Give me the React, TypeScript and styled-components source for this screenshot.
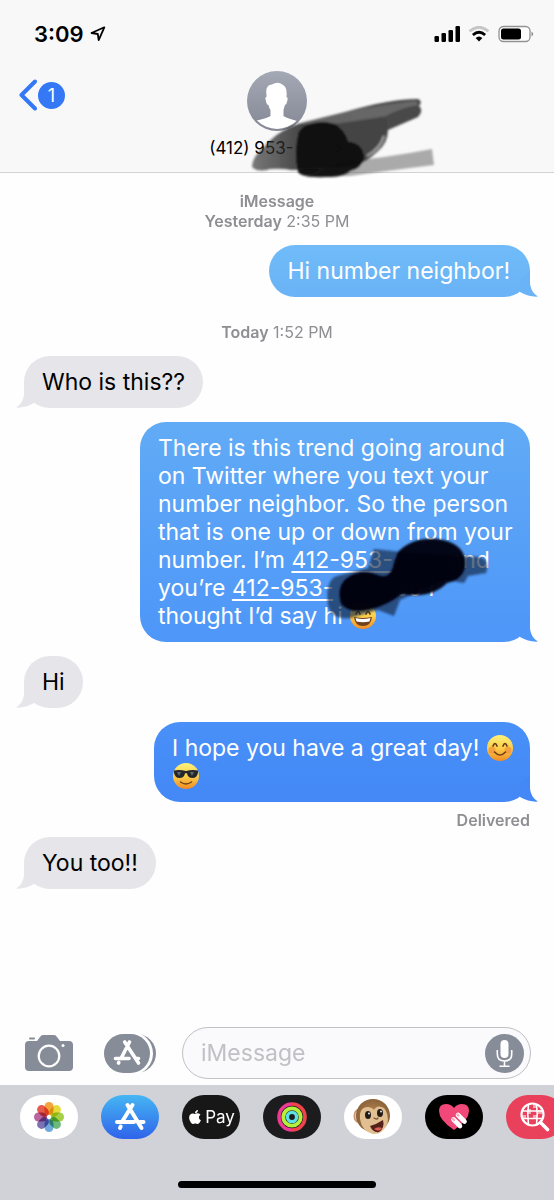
import React from "react";
import styled, { createGlobalStyle } from "styled-components";
import { FaApple } from "react-icons/fa";

const GlobalStyle = createGlobalStyle`
  *, *::before, *::after { box-sizing: border-box; }
  body { margin: 0; background: #fff; }
  button, input { font: inherit; color: inherit; }
`;

const Screen = styled.div`
  display: flex;
  flex-direction: column;
  min-height: 100vh;
  overflow: hidden;
  background: #fefefe;
  color: #000;
  font-family: Inter, "Liberation Sans", sans-serif;
`;

const Header = styled.header`
  position: relative;
  padding: 24px 18px 14px;
  background: #f8f8f8;
  border-bottom: 1px solid #d3d3d5;
`;

const StatusBar = styled.div`
  display: flex;
  align-items: center;
  justify-content: space-between;
  height: 20px;
  padding: 0 2px 0 16px;
`;

const Clock = styled.div`
  display: flex;
  align-items: center;
  gap: 6px;
  font-size: 22px;
  font-weight: 600;
  line-height: 20px;
`;

const StatusIcons = styled.div`
  display: flex;
  align-items: center;
  gap: 8px;
`;

const NavBar = styled.div`
  display: grid;
  grid-template-columns: 1fr auto 1fr;
  align-items: start;
  margin-top: 27px;
`;

const PlainButton = styled.button`
  display: flex;
  align-items: center;
  padding: 0;
  border: 0;
  background: none;
  cursor: pointer;
`;

const BackButton = styled(PlainButton)`
  gap: 1px;
  margin-top: 8px;
  justify-self: start;
`;

const UnreadBadge = styled.span`
  width: 27px;
  height: 27px;
  border-radius: 50%;
  background: #3478f6;
  color: #fff;
  font-size: 18px;
  line-height: 27px;
  text-align: center;
`;

const ContactButton = styled(PlainButton)`
  flex-direction: column;
  gap: 7px;
  font-size: 17px;
  line-height: 20px;
`;

const ContactName = styled.span`
  display: flex;
  align-items: center;
  white-space: nowrap;
`;

const Hidden = styled.span<{ $width: number }>`
  display: inline-block;
  width: ${(p) => p.$width}px;
`;

const HeaderScribble = styled.svg`
  position: absolute;
  top: 90px;
  left: calc(50% - 37px);
  pointer-events: none;
`;

const Thread = styled.main`
  flex: 1;
  display: flex;
  flex-direction: column;
  gap: 14px;
  padding: 18px 24px 24px;
`;

const Stamp = styled.div`
  color: #8e8e93;
  font-size: 16px;
  line-height: 20px;
  text-align: center;
`;

const DayStamp = styled(Stamp)`
  padding-top: 11px;
`;

const Strong = styled.span`
  font-weight: 600;
`;

const Bubble = styled.div`
  position: relative;
  width: fit-content;
  max-width: 390px;
  padding: 12px 18px;
  border-radius: 26px;
  font-size: 23px;
  line-height: 28px;
`;

const Received = styled(Bubble)`
  background: #e5e5ea;
  color: #000;
`;

const Sent = styled(Bubble)<{ $from: string; $to: string; $max?: number; $tight?: boolean }>`
  align-self: flex-end;
  max-width: ${(p) => p.$max ?? 390}px;
  padding-right: ${(p) => (p.$tight ? 12 : 20)}px;
  background: linear-gradient(${(p) => p.$from}, ${(p) => p.$to});
  color: #fff;
`;

const TailSvg = styled.svg<{ $side: "left" | "right" }>`
  position: absolute;
  bottom: 0;
  ${(p) => p.$side}: -8px;
  transform: ${(p) => (p.$side === "left" ? "scaleX(-1)" : "none")};
`;

const SentGroup = styled.div`
  display: flex;
  flex-direction: column;
  gap: 8px;
  margin-bottom: -7px;
`;

const Delivered = styled(Stamp)`
  font-weight: 600;
  text-align: right;
`;

const PhoneLink = styled.a`
  color: inherit;
  text-decoration: underline;
  text-decoration-thickness: 2px;
  text-underline-offset: 3px;
`;

const Emoji = styled.svg`
  display: inline-block;
  margin: -4px 0;
  vertical-align: -2px;
`;

const BubbleScribble = styled.svg`
  position: absolute;
  right: 26px;
  top: 110px;
  pointer-events: none;
`;

const Composer = styled.form`
  display: flex;
  align-items: center;
  padding: 0 23px 6px 25px;
`;

const AppsButton = styled(PlainButton)`
  margin: 0 26px 0 31px;
`;

const Field = styled.div`
  display: flex;
  flex: 1;
  align-items: center;
  min-width: 0;
  height: 52px;
  padding: 0 6px 0 18px;
  border: 1px solid #c0c0c6;
  border-radius: 26px;
  background: #fafafc;
`;

const MessageInput = styled.input`
  flex: 1;
  min-width: 0;
  padding: 0;
  border: 0;
  outline: 0;
  background: none;
  font-size: 23px;
  line-height: 28px;
  &::placeholder { color: #c0c0c6; opacity: 1; }
`;

const AppDrawer = styled.footer`
  display: flex;
  flex-direction: column;
  align-items: center;
  background: #d1d2d8;
`;

const AppRow = styled.nav`
  display: flex;
  gap: 23px;
  width: 100%;
  padding: 10px 0 0 20px;
  overflow: hidden;
`;

const AppPill = styled.button<{ $bg: string }>`
  display: flex;
  flex: none;
  align-items: center;
  justify-content: center;
  gap: 2px;
  width: 58px;
  height: 44px;
  padding: 0;
  border: 0;
  border-radius: 22px;
  background: ${(p) => p.$bg};
  color: #fff;
  font-size: 17px;
  line-height: 24px;
  cursor: pointer;
`;

const HomeIndicator = styled.div`
  width: 198px;
  height: 7px;
  margin: 42px 0 12px;
  border-radius: 4px;
  background: #000;
`;

const Tail = ({ side, color }: { side: "left" | "right"; color: string }) => (
  <TailSvg $side={side} width="26" height="26" viewBox="0 0 26 26" aria-hidden="true">
    <path d="M8 8 L18 0 V12 C18.500 18 21 22.500 26 25.600 C20 26 14 24.500 8 21 Z" fill={color} />
  </TailSvg>
);

const Face = ({ kind, label }: { kind: "grin" | "blush" | "cool"; label: string }) => (
  <Emoji width="28" height="28" viewBox="0 0 28 28" role="img" aria-label={label}>
    <defs>
      <linearGradient id={`face-${kind}`} x1="0" y1="0" x2="0" y2="1">
        <stop offset="0" stopColor="#fff27a" />
        <stop offset="0.5" stopColor="#fbcf4a" />
        <stop offset="1" stopColor="#f08a25" />
      </linearGradient>
    </defs>
    <circle cx="14" cy="14" r="13" fill={`url(#face-${kind})`} />
    {kind === "cool" ? (
      <>
        <path d="M2 8.500 Q8 7.500 14 9 Q20 7.500 26 8.500 V10.500 Q25 16 20.500 16 Q16 16 15 11.500 Q14 10.500 13 11.500 Q12 16 7.500 16 Q3 16 2 10.500 Z" fill="#24262b" />
        <path d="M5 10 L9 10 L7 14 Z M18 10 H22 L20 14 Z" fill="#62676f" />
        <path d="M8.500 20 Q14 24 19.500 20" fill="none" stroke="#70401a" strokeWidth="1.500" strokeLinecap="round" />
      </>
    ) : (
      <>
        <path d="M7 12 Q9 7 11 12 M17 12 Q19 7 21 12" fill="none" stroke="#62381a" strokeWidth="1.700" strokeLinecap="round" />
        {kind === "grin" ? (
          <>
            <path d="M5 15 Q14 17 23 15 Q22 24 14 24 Q6 24 5 15 Z" fill="#70401a" />
            <path d="M6.500 16 Q14 18 21.500 16 L20.500 19.500 Q14 21 7.500 19.500 Z" fill="#fff" />
          </>
        ) : (
          <>
            <circle cx="6" cy="16" r="3.500" fill="#f3873b" opacity="0.6" />
            <circle cx="22" cy="16" r="3.500" fill="#f3873b" opacity="0.6" />
            <path d="M8.500 18 Q14 24 19.500 18" fill="none" stroke="#70401a" strokeWidth="1.600" strokeLinecap="round" />
          </>
        )}
      </>
    )}
  </Emoji>
);

const StoreGlyph = ({ size = 44 }: { size?: number }) => (
  <svg width={size} height={size} viewBox="7 0 44 44" fill="none" stroke="#fff" strokeWidth="4" strokeLinecap="round" aria-hidden="true">
    <path d="M31.500 10 L21.500 26 M26.500 10 L40.500 33 M16 27 H33 M39 27 H42.500 M19.700 31.500 L19 33" />
  </svg>
);

const petals = ["#f5a33b", "#e5dc3a", "#a5cf46", "#6cba7b", "#6fa8dc", "#7e72b5", "#b9659f", "#e65a4f"];

export default function App() {
  return (
    <Screen>
      <GlobalStyle />
      <Header>
        <StatusBar>
          <Clock>
            3:09
            <svg width="16" height="16" viewBox="0 0 16 16" role="img" aria-label="Location in use">
              <path d="M14.300 1.300 L1.500 7 L7.800 8 L8.700 14.200 Z" fill="none" stroke="#000" strokeWidth="1.800" strokeLinejoin="round" />
            </svg>
          </Clock>
          <StatusIcons>
            <svg width="26" height="16" viewBox="0 0 26 16" role="img" aria-label="Signal">
              <rect x="0.500" y="10" width="4.500" height="6" rx="1.200" />
              <rect x="7.500" y="7" width="4.500" height="9" rx="1.200" />
              <rect x="14.500" y="4" width="4.500" height="12" rx="1.200" />
              <rect x="21.500" y="0" width="4.500" height="16" rx="1.200" />
            </svg>
            <svg width="22" height="16" viewBox="0 0 22 16" fill="none" role="img" aria-label="Wi-Fi">
              <path d="M1.500 5.300 Q11 -2.800 20.500 5.300" stroke="#c6c6c8" strokeWidth="2.800" />
              <path d="M4.900 9 Q11 3.600 17.100 9" stroke="#000" strokeWidth="2.900" />
              <path d="M7.600 12 Q11 9 14.400 12 L11 15.600 Z" fill="#000" />
            </svg>
            <svg width="36" height="18" viewBox="0 0 36 18" role="img" aria-label="Battery">
              <rect x="1" y="1.500" width="31" height="15" rx="4.500" fill="#fff" stroke="#929294" strokeWidth="1.300" />
              <rect x="3" y="3.500" width="20" height="11" rx="2.500" />
              <path d="M33.500 6.500 Q37 9 33.500 11.500 Z" fill="#8a8a8c" />
            </svg>
          </StatusIcons>
        </StatusBar>
        <NavBar>
          <BackButton type="button" aria-label="Back, 1 unread">
            <svg width="19" height="32" viewBox="0 0 19 32" aria-hidden="true">
              <path d="M17 2.500 L3.500 16 L17 29.500" fill="none" stroke="#3478f6" strokeWidth="4" strokeLinecap="round" strokeLinejoin="round" />
            </svg>
            <UnreadBadge>1</UnreadBadge>
          </BackButton>
          <ContactButton type="button">
            <svg width="60" height="60" viewBox="0 0 60 60" aria-hidden="true">
              <defs>
                <linearGradient id="avatar" x1="0" y1="0" x2="0" y2="1">
                  <stop offset="0" stopColor="#a4a9b6" />
                  <stop offset="1" stopColor="#858894" />
                </linearGradient>
                <clipPath id="avatar-clip"><circle cx="30" cy="30" r="28" /></clipPath>
              </defs>
              <circle cx="30" cy="30" r="30" fill="url(#avatar)" />
              <path clipPath="url(#avatar-clip)" d="M19.500 24 Q18 14 25 13.500 Q31 10 36 14 Q40.500 16 39.500 26 Q41.500 26 40 31 Q39.500 34 38 34 Q37 37 36.500 39 V45 Q39 47 50 50 V60 H8 V50 Q21 47 23.500 45 V39 Q22 37 21.500 34 Q19.500 34 19 30 Q17.500 26 19.500 26 Z" fill="#fff" />
            </svg>
            <ContactName>(412) 953-<Hidden $width={40} />&gt;</ContactName>
          </ContactButton>
        </NavBar>
        <HeaderScribble width="204" height="94" viewBox="240 90 204 94" aria-hidden="true">
          <defs>
            <filter id="soft" x="-10%" y="-10%" width="120%" height="120%"><feGaussianBlur stdDeviation="1.300" /></filter>
            <linearGradient id="sweep" x1="0" y1="0" x2="1" y2="0">
              <stop offset="0" stopColor="#333" stopOpacity="0.650" />
              <stop offset="0.300" stopColor="#222" stopOpacity="0.850" />
              <stop offset="1" stopColor="#2a2a2a" stopOpacity="0.850" />
            </linearGradient>
          </defs>
          <g filter="url(#soft)">
            <path d="M340 162 Q385 158 432 149 L434 165 Q385 171 350 176 L305 177 Z" fill="#777" opacity="0.600" />
            <path d="M252 167 Q252 157 264 147 Q280 128 305 122 L345 112 Q390 99 418 99 Q423 101 419 106 Q424 110 418 117 L388 130 Q388 143 377 152 Q366 163 350 167 L292 170 Q280 168 270 169 Q258 173 252 167 Z" fill="url(#sweep)" />
            <path d="M300 124 Q350 108 416 101 L418 105 Q399 108 386 116 L340 123 Z" fill="#999" opacity="0.400" />
            <path d="M367 156 Q381 148 384 136" stroke="#ddd" strokeWidth="2" fill="none" opacity="0.600" />
            <path d="M299 132 Q306 122 322 122 Q342 122 348 142 Q363 143 364 158 Q361 169 350 171 Q345 177 326 177 Q302 178 298 172 Q294 151 299 132 Z" fill="#060606" opacity="0.920" />
          </g>
        </HeaderScribble>
      </Header>

      <Thread>
        <Stamp>
          <Strong>iMessage</Strong>
          <br />
          <Strong>Yesterday</Strong> 2:35 PM
        </Stamp>
        <Sent $from="#70bbf8" $to="#69b3f6">
          Hi number neighbor!
          <Tail side="right" color="#69b3f6" />
        </Sent>
        <DayStamp>
          <Strong>Today</Strong> 1:52 PM
        </DayStamp>
        <Received>
          Who is this??
          <Tail side="left" color="#e5e5ea" />
        </Received>
        <Sent $tight $from="#61abf6" $to="#4e96f8">
          There is this trend going around on Twitter where you text your number neighbor. So the person that is one up or down from your number. I’m{" "}
          <PhoneLink href="#first-number">412-953-</PhoneLink><Hidden $width={50} /> and you’re{" "}
          <PhoneLink href="#second-number">412-953-</PhoneLink><Hidden $width={56} /> so I thought I’d say hi{" "}
          <Face kind="grin" label="Grinning face with smiling eyes" />
          <Tail side="right" color="#4e96f8" />
          <BubbleScribble width="184" height="90" viewBox="320 532 184 90" aria-hidden="true">
            <g filter="url(#soft)">
              <path d="M374 549 L402 552 L480 557 Q490 560 486 573 L468 576 L464 583 L445 580 L400 600 L394 616 L378 610 L350 618 Q331 620 328 605 Q325 580 337 576 L368 568 Z" fill="#122743" opacity="0.650" />
              <path d="M398 552 Q412 537 438 539 Q463 543 465 560 Q467 579 447 583 Q431 599 402 594 Q388 605 372 609 Q350 615 341 604 Q336 586 347 578 Q361 568 378 575 Q391 580 394 562 Z" fill="#020408" opacity="0.960" />
            </g>
          </BubbleScribble>
        </Sent>
        <Received>
          Hi
          <Tail side="left" color="#e5e5ea" />
        </Received>
        <SentGroup>
          <Sent $tight $max={376} $from="#4990f8" $to="#4388f6">
            I hope you have a great day! <Face kind="blush" label="Smiling face" />{" "}
            <Face kind="cool" label="Smiling face with sunglasses" />
            <Tail side="right" color="#4388f6" />
          </Sent>
          <Delivered>Delivered</Delivered>
        </SentGroup>
        <Received>
          You too!!
          <Tail side="left" color="#e5e5ea" />
        </Received>
      </Thread>

      <Composer onSubmit={(e) => e.preventDefault()}>
        <PlainButton type="button" aria-label="Camera">
          <svg width="48" height="36" viewBox="0 0 48 36" aria-hidden="true">
            <path d="M4 6 H12 L15 2 Q16 0 18 0 H29 Q31 0 32 2 L35 6 H44 Q48 6 48 10 V32 Q48 36 44 36 H4 Q0 36 0 32 V10 Q0 6 4 6 Z" fill="#868c98" />
            <rect x="4" y="2.500" width="6" height="2" rx="1" fill="#868c98" />
            <circle cx="24" cy="21" r="10.300" fill="none" stroke="#fff" strokeWidth="2.200" />
            <circle cx="38" cy="10.500" r="1.500" fill="#fff" />
          </svg>
        </PlainButton>
        <AppsButton type="button" aria-label="Apps">
          <svg width="52" height="39" viewBox="0 0 52 39" aria-hidden="true">
            <rect x="6" width="46" height="39" rx="19.500" fill="#868c98" />
            <rect x="-2" y="-2" width="51" height="43" rx="21.500" fill="#fff" />
            <rect width="46" height="39" rx="19.500" fill="#868c98" />
            <path d="M25.500 8 L17 24.500 M20.700 8 L34.500 29 M11.500 24.500 H25 M32 24.500 H34.500 M14.800 28.500 L14.500 29" fill="none" stroke="#fff" strokeWidth="3.600" strokeLinecap="round" />
          </svg>
        </AppsButton>
        <Field>
          <MessageInput type="text" placeholder="iMessage" aria-label="iMessage" />
          <PlainButton type="button" aria-label="Record audio">
            <svg width="39" height="39" viewBox="0 0 39 39" fill="none" aria-hidden="true">
              <circle cx="19.500" cy="19.500" r="19.500" fill="#868c98" />
              <rect x="15.500" y="6" width="8" height="18" rx="4" fill="#fff" />
              <path d="M12.300 16 V20 Q12.300 27 19.500 27 Q26.700 27 26.700 20 V16 M19.500 27 V32 M14.500 32.300 H24.500" stroke="#fff" strokeWidth="1.600" />
            </svg>
          </PlainButton>
        </Field>
      </Composer>

      <AppDrawer>
        <AppRow aria-label="iMessage apps">
          <AppPill type="button" $bg="#fff" aria-label="Photos">
            <svg width="32" height="32" viewBox="-16 -16 32 32" aria-hidden="true">
              {petals.map((color, i) => (
                <rect key={color} x="-4.500" y="-15" width="9" height="13" rx="4.500" fill={color} transform={`rotate(${i * 45})`} style={{ mixBlendMode: "multiply" }} />
              ))}
            </svg>
          </AppPill>
          <AppPill type="button" $bg="linear-gradient(#45b6f3, #2f63ea)" aria-label="App Store">
            <StoreGlyph />
          </AppPill>
          <AppPill type="button" $bg="#171717" aria-label="Apple Pay">
            <FaApple size={16} aria-hidden="true" />
            Pay
          </AppPill>
          <AppPill type="button" $bg="#1c1c1f" aria-label="Activity">
            <svg width="32" height="32" viewBox="-16 -16 32 32" fill="none" aria-hidden="true">
              <path d="M0 -13 A13 13 0 0 0 0 13" stroke="#ee3a93" strokeWidth="3.600" />
              <path d="M0 -13 A13 13 0 0 1 0 13" stroke="#f0444a" strokeWidth="3.600" />
              <circle r="8.700" stroke="#b5f03c" strokeWidth="3.800" />
              <circle r="4.600" stroke="#5fe0e4" strokeWidth="3.400" />
            </svg>
          </AppPill>
          <AppPill type="button" $bg="#fff" aria-label="Animoji">
            <svg width="42" height="38" viewBox="0 0 42 38" aria-hidden="true">
              <defs>
                <radialGradient id="fur"><stop offset="0" stopColor="#b98b58" /><stop offset="1" stopColor="#8b6337" /></radialGradient>
              </defs>
              <ellipse cx="6.500" cy="18" rx="5" ry="7" fill="#c39770" />
              <ellipse cx="6" cy="18" rx="3.200" ry="5" fill="#f0bda6" />
              <ellipse cx="21" cy="17.500" rx="17" ry="16.500" fill="url(#fur)" />
              <path d="M8 21 Q7 9 16 9 Q21 10 22 12 Q25 6 32 10 Q37 16 35.500 26 Q30 37 21 36 Q10 34 8 21 Z" fill="#e2bf91" />
              <ellipse cx="16" cy="17" rx="3" ry="4" fill="#211b18" />
              <ellipse cx="28" cy="15" rx="3" ry="4" fill="#211b18" />
              <circle cx="17" cy="15.500" r="0.900" fill="#fff" />
              <circle cx="29" cy="13.500" r="0.900" fill="#fff" />
              <path d="M22 20 L24 21 M26 20 L25 21" stroke="#6f4c31" strokeWidth="1.200" strokeLinecap="round" />
              <path d="M18 28 Q25 26 31 22 Q33 30 27 34 Q21 35 18 28 Z" fill="#54211b" />
              <path d="M22 31 Q26 28 30 30 Q27 35 22 31 Z" fill="#dd5c54" />
            </svg>
          </AppPill>
          <AppPill type="button" $bg="#000" aria-label="Digital Touch">
            <svg width="32" height="30" viewBox="0 0 32 30" aria-hidden="true">
              <path d="M16 28 Q1 18 1 9 Q1 2 8 2 Q13 2 16 6 Q19 2 24 2 Q31 2 31 9 Q31 18 16 28 Z" fill="#f04878" />
              <path d="M15.500 17.500 L22 24 M20 13 L26.500 19.500" stroke="#fff" strokeWidth="4.600" strokeLinecap="round" />
              <path d="M15 17 L16 18 M19.500 12.500 L20.500 13.500" stroke="#f7a9bd" strokeWidth="2.400" strokeLinecap="round" />
            </svg>
          </AppPill>
          <AppPill type="button" $bg="#e9415b" aria-label="Images">
            <svg width="30" height="30" viewBox="0 0 30 30" fill="none" stroke="#fff" aria-hidden="true">
              <path d="M7 7 H11 V12 H7 Z M13 2 H17 V6 H13 Z M13 13 H17 V17 H13 Z M18 8 H22 V12 H18 Z M3 13 H6 V17 H3 Z" fill="#f6a6b2" stroke="none" />
              <circle cx="12.500" cy="12.500" r="11" strokeWidth="2.200" />
              <path d="M2 9 H23 M2 16.500 H23 M8.500 2 Q7 12 8.500 23 M16.500 2 Q18 12 16.500 23" strokeWidth="1.600" />
              <path d="M20.500 20.500 L27.500 27.500" strokeWidth="3.600" strokeLinecap="round" />
            </svg>
          </AppPill>
        </AppRow>
        <HomeIndicator />
      </AppDrawer>
    </Screen>
  );
}
